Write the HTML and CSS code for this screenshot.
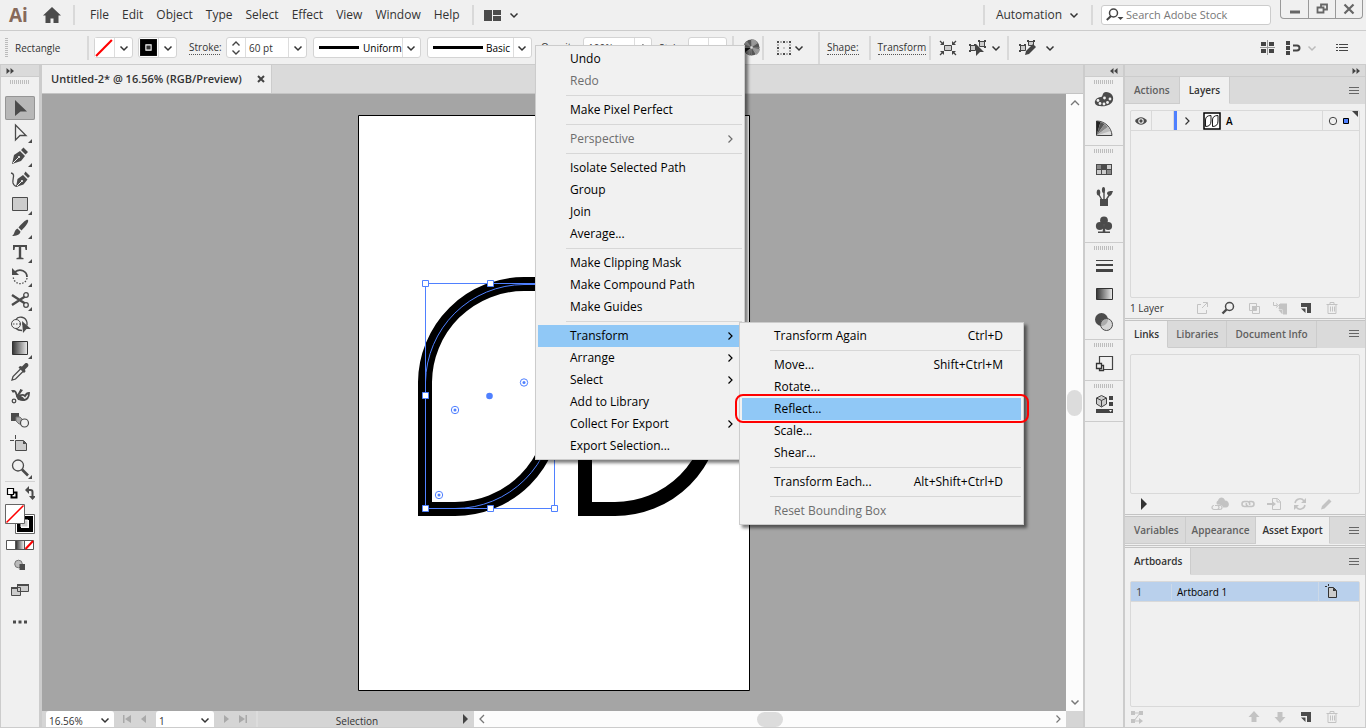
FILE: index.html
```html
<!DOCTYPE html>
<html lang="en">
<head>
<meta charset="utf-8">
<title>Untitled-2* @ 16.56% (RGB/Preview)</title>
<link rel="stylesheet" href="styles.css">
</head>
<body>
<svg class="defs" aria-hidden="true">
  <defs>
    <linearGradient id="ramp"><stop offset="0" stop-color="#333"/><stop offset="1" stop-color="#eee"/></linearGradient>
    <symbol id="chev" viewBox="0 0 10 10"><path d="M1.500 3.500 5 7l3.500-3.500" fill="none" stroke="currentColor" stroke-width="1.500"/></symbol>
    <symbol id="chev-r" viewBox="0 0 10 10"><path d="M3.500 1.500 7 5 3.500 8.500" fill="none" stroke="currentColor" stroke-width="1.200"/></symbol>
    <symbol id="burger" viewBox="0 0 12 10"><path d="M1 1.500h10M1 4.500h10M1 7.500h10" stroke="currentColor" fill="none"/></symbol>
    <symbol id="trash" viewBox="0 0 14 14"><path d="M1.500 3.500h11M5 3V1.500h4V3M3 4v8.500h8V4M5.500 5.500v5M7.500 5.500v5M9.500 5.500v5" fill="none" stroke="currentColor"/></symbol>
    <symbol id="newpage" viewBox="0 0 14 14"><path d="M2 2h10v10H8V6H2z" fill="currentColor"/><path d="M2 7.500h4.500V12z" fill="currentColor"/></symbol>
    <symbol id="dbl-r" viewBox="0 0 8 6"><path d="M.5 0 4 3 .5 6zM4.500 0 8 3 4.500 6z" fill="#444"/></symbol>
  </defs>
</svg>

<header class="menubar">
  <div class="logo">Ai</div>
  <button class="home" aria-label="Home"><svg viewBox="0 0 18 16" width="18" height="16"><path d="M9 0 18 8.500h-2.500V16h-5v-4.500h-3V16h-5V8.500H0z" fill="#4b4b4b"/></svg></button>
  <i class="rule"></i>
  <nav class="menus">
    <button>File</button><button>Edit</button><button>Object</button><button>Type</button><button>Select</button><button>Effect</button><button>View</button><button>Window</button><button>Help</button>
  </nav>
  <i class="rule"></i>
  <button class="arrange" aria-label="Arrange documents"><svg width="17" height="11" viewBox="0 0 17 11"><path d="M0 0h8v11H0zM9 0h8v5H9zM9 6h8v5H9z" fill="#4b4b4b"/></svg><svg width="10" height="10"><use href="#chev"/></svg></button>
  <span class="grow"></span>
  <i class="rule"></i>
  <button class="workspace-name">Automation<svg width="10" height="10"><use href="#chev"/></svg></button>
  <i class="rule"></i>
  <label class="search"><svg width="18" height="14" viewBox="0 0 18 14"><circle cx="7.500" cy="5" r="4" fill="none" stroke="#444" stroke-width="1.500"/><path d="M5 8 .8 12" stroke="#444" stroke-width="2"/><path d="M11.500 9h6l-3 3z" fill="#444"/></svg><input type="text" placeholder="Search Adobe Stock" aria-label="Search Adobe Stock"></label>
  <div class="winbtns">
    <button aria-label="Minimize"><svg width="12" height="12"><path d="M1 9h10" stroke="#666" stroke-width="3"/></svg></button>
    <button aria-label="Restore"><svg width="12" height="12" viewBox="0 0 12 12"><path d="M5 4V1.500h6v5H8M1.500 4.500h6v5h-6z" fill="none" stroke="#666" stroke-width="1.800"/></svg></button>
    <button aria-label="Close"><svg width="12" height="12" viewBox="0 0 12 12"><path d="m1.500 1.500 9 9m0-9-9 9" stroke="#666" stroke-width="2.200"/></svg></button>
  </div>
</header>

<section class="control">
  <i class="grip-v"></i>
  <span class="objname">Rectangle</span>
  <i class="rule"></i>
  <button class="swatch" aria-label="Fill"><svg class="chip" viewBox="0 0 18 18"><path fill="#fff" d="M0 0h18v18H0z"/><path d="m1 17 15-15" stroke="#f00" stroke-width="2"/></svg><svg class="arr"><use href="#chev"/></svg></button>
  <button class="swatch" aria-label="Stroke colour"><svg class="chip" viewBox="0 0 18 18"><path d="M1 1h16v16H1z"/><path d="M6.500 6.500h5v5h-5z" fill="#333" stroke="#fff"/></svg><svg class="arr"><use href="#chev"/></svg></button>
  <label class="dotted stroke-label" for="sw">Stroke:</label>
  <div class="field weight"><svg width="18" height="18" viewBox="0 0 18 18"><path d="m5.500 6.500 3.500-3.500 3.500 3.500M5.500 11.500l3.500 3.500 3.500-3.500" fill="none" stroke="#444" stroke-width="1.400"/></svg><input id="sw" type="text" value="60 pt"><svg class="arr"><use href="#chev"/></svg></div>
  <div class="combo profile"><select aria-label="Width profile"><option>Uniform</option></select><i class="line"></i><svg class="arr"><use href="#chev"/></svg></div>
  <div class="combo brush"><select aria-label="Brush"><option>Basic</option></select><i class="line"></i><svg class="arr"><use href="#chev"/></svg></div>
  <label class="dotted opacity" for="op">Opacity:</label>
  <div class="field opac"><input id="op" type="text" value="100%"><svg class="arr"><use href="#chev-r"/></svg></div>
  <span class="style-label">Style:</span>
  <button class="swatch" aria-label="Graphic style"><svg class="chip"></svg><svg class="arr"><use href="#chev"/></svg></button>
  <i class="rule"></i>
  <button class="ic recolor" aria-label="Recolor artwork"><svg width="17" height="17" viewBox="0 0 17 17"><circle cx="8.500" cy="8.500" r="8" fill="#555"/><path d="M8.500 8.500 8 0a8 8 0 0 1 7 4zM8.500 8.500 17 10a8 8 0 0 1-4 6z" fill="#999"/><path d="M8.500 8.500 2 13a8 8 0 0 0 5 3.500zM8.500 8.500 1 5l3-3z" fill="#777"/><path d="M8.500 8.500 0 9a8 8 0 0 0 2 4z" fill="#111"/><path d="M8.500.5v16M.5 8.500h16M3 3l11 11M14 3 3 14" stroke="#888" stroke-width=".5"/><circle cx="8.500" cy="8.500" r="1.200" fill="#ddd"/></svg></button>
  <i class="rule"></i>
  <button class="ic align" aria-label="Align to"><svg width="16" height="16" viewBox="0 0 16 16"><path d="M2 2h12v12H2z" fill="none" stroke="#4b4b4b" stroke-width=".8"/><path d="M.5.500h3v3h-3zM6.500.500h3v3h-3zM12.500.500h3v3h-3zM.5 6.500h3v3h-3zM7 7h2v2H7zM12.500 6.500h3v3h-3zM.5 12.500h3v3h-3zM6.500 12.500h3v3h-3zM12.500 12.500h3v3h-3z" fill="#4b4b4b" stroke="#f0f0f0"/></svg><svg class="mini"><use href="#chev"/></svg></button>
  <i class="rule tall"></i>
  <button class="dotted shape">Shape:</button>
  <i class="rule"></i>
  <button class="dotted transform">Transform</button>
  <i class="rule"></i>
  <button class="ic iso" aria-label="Isolate selected object"><svg width="18" height="16" viewBox="0 0 18 16"><path d="M5.500 5.500h7v5h-7z" fill="#ccc" stroke="#444"/><path d="m1 1 3 3m13-3-3 3M1 15l3-3m13 3-3-3" stroke="#444" stroke-width="1.300"/><path d="M5 1v4H1zM13 1v4h4zM5 15v-4H1zM13 15v-4h4z" fill="#444"/></svg></button>
  <button class="ic similar" aria-label="Select similar"><svg width="17" height="16" viewBox="0 0 17 16"><path d="M1.500 5.500h5v5h-5zM10.500 1.500h5v5h-5z" fill="#ccc" stroke="#444"/><path d="M0 4h2v2H0zM5 4h2v2H5zM0 10h2v2H0zM9 0h2v2H9zM15 0h2v2h-2zM15 6h2v2h-2z" fill="#444"/><path d="m7 4 8 8h-4l-4 4z" fill="#444"/></svg><svg class="mini"><use href="#chev"/></svg></button>
  <i class="rule"></i>
  <button class="ic edit" aria-label="Edit similar"><svg width="17" height="16" viewBox="0 0 17 16"><path d="M1.500 5.500h5v5h-5zM9.500 1.500h5v4h-5z" fill="#ccc" stroke="#444"/><path d="M0 4h2v2H0zM5 4h2v2H5zM0 10h2v2H0zM8 0h2v2H8zM14 0h2v2h-2z" fill="#444"/><path d="m6 15 1-4 7-7 3 3-7 7z" fill="#444"/></svg><svg class="mini"><use href="#chev"/></svg></button>
  <span class="grow"></span>
  <button class="ic pix" aria-label="Snap to pixel"><svg width="15" height="15" viewBox="0 0 15 15"><path d="M1 2h5v4H1zM9 2h5v4H9zM1 9h5v4H1zM9 9h5v4H9z" fill="#444"/><path d="M7.500 0v15M0 7.500h15" stroke="#999"/></svg></button>
  <button class="ic snap" aria-label="Snap options"><svg width="15" height="14" viewBox="0 0 15 14"><path d="M0 0h4v4H0zM0 5h4v4H0zM0 10h4v4H0z" fill="#444"/><path d="M7 4.500h4a2.500 2.500 0 0 1 0 5H7" fill="none" stroke="#444" stroke-width="2"/></svg><svg class="mini faded"><use href="#chev"/></svg></button>
  <button class="ic" aria-label="Panel menu"><svg width="12" height="10" viewBox="0 0 12 10"><path d="M3 1.500h9M3 4.500h9M3 7.500h9M0 1.500h2M0 4.500h2M0 7.500h2" stroke="#444"/></svg></button>
</section>

<main class="work">
  <aside class="tools">
    <div class="strip"><svg width="8" height="6"><use href="#dbl-r"/></svg></div>
    <i class="grip"></i>
    <div class="toollist">
      <button class="tool on" aria-label="Selection"><svg viewBox="0 0 24 24"><path d="m7 4 12 11.500h-6.500L7 20z" fill="#4b4b4b"/></svg></button>
      <button class="tool more" aria-label="Direct selection"><svg viewBox="0 0 24 24"><path d="m7.500 5 10.500 10.500h-6L7.500 20z" fill="none" stroke="#4b4b4b" stroke-width="1.300"/></svg></button>
      <button class="tool more" aria-label="Pen"><svg viewBox="0 0 24 24"><path d="m4 20 2-9 6-4 5 5-4 5-9 3zM13 6l2.500-2.500L20 8l-2.500 2.500z" fill="#4b4b4b"/><path d="m5 19 5.500-5.500" stroke="#f0f0f0"/><circle cx="11" cy="13" r="1.100" fill="#f0f0f0"/></svg></button>
      <button class="tool" aria-label="Curvature"><svg viewBox="0 0 24 24"><path d="m8 19 1.500-8 5.500-4 4.500 4.500-4 5L8 19zM16 6l1.500-2.500L22 8l-2 2z" fill="#4b4b4b"/><path d="M3 5c5 1 1 6 2 10 1 3 3 4 5 2" fill="none" stroke="#4b4b4b" stroke-width="1.300"/><path d="m9 18 5-5" stroke="#f0f0f0"/><circle cx="14" cy="13" r="1.100" fill="#f0f0f0"/></svg></button>
      <button class="tool more" aria-label="Rectangle"><svg viewBox="0 0 24 24"><path d="M4.500 5.500h15v13h-15z" fill="#ccc" stroke="#4b4b4b"/></svg></button>
      <button class="tool more" aria-label="Paintbrush"><svg viewBox="0 0 24 24"><path d="M20 4c-1-1-4 1-9.500 7.500l3 3C18 10 21 6 20 4zM9.500 12.500l3 3C12 19 8 20 4 20c3-2 2-6 5.500-7.500z" fill="#4b4b4b"/></svg></button>
      <button class="tool more" aria-label="Type"><svg viewBox="0 0 24 24"><path d="M5 5h14v5h-1.500L17 7h-3.800v10.500l2.300.5v1.200h-7V18l2.300-.5V7H7l-.5 3H5z" fill="#4b4b4b"/></svg></button>
      <button class="tool more" aria-label="Rotate"><svg viewBox="0 0 24 24"><path d="M7 8c5-4 12-1 12 5" fill="none" stroke="#4b4b4b" stroke-width="1.800"/><path d="M4 4v7h7z" fill="#4b4b4b"/><path d="M19 14c-1 6-9 8-13 2l-1-3" fill="none" stroke="#4b4b4b" stroke-width="1.300" stroke-dasharray="1.500 1.500"/></svg></button>
      <button class="tool more" aria-label="Scissors"><svg viewBox="0 0 24 24"><path d="m4 7 13 8.500M4 17l13-8.500" stroke="#4b4b4b" stroke-width="2.400"/><circle cx="18" cy="7" r="2.300" fill="#f0f0f0" stroke="#4b4b4b" stroke-width="1.300"/><circle cx="18" cy="17" r="2.300" fill="#f0f0f0" stroke="#4b4b4b" stroke-width="1.300"/></svg></button>
      <button class="tool" aria-label="Shape builder"><svg viewBox="0 0 24 24"><circle cx="8" cy="12" r="4.500" fill="none" stroke="#4b4b4b"/><path d="M8 7.500c2-4 10-3 11 3v3M8 16.500c2 2 4 2 6 2" fill="none" stroke="#4b4b4b" stroke-width="1.300"/><path d="M5 12h10" stroke="#4b4b4b" stroke-dasharray="1.500 1.500"/><path d="m14 9 9 8h-4.500L15 21z" fill="#4b4b4b"/></svg></button>
      <button class="tool more" aria-label="Gradient"><svg viewBox="0 0 24 24"><path d="M4.500 5.500h15v13h-15z" fill="url(#ramp)" stroke="#333"/></svg></button>
      <button class="tool" aria-label="Eyedropper"><svg viewBox="0 0 24 24"><path d="m13 8.500-8 8-1 3.500 3.500-1 8-8" fill="none" stroke="#4b4b4b" stroke-width="1.300"/><path d="m12 6 2 .5 3-3c2-1.500 4.500 1 3 3l-3 3 .5 2L16 13l-5.500-5.500z" fill="#4b4b4b"/></svg></button>
      <button class="tool" aria-label="Puppet warp"><svg viewBox="0 0 24 24"><path d="M4 7c4-1 4 2 5 5s3 4 6 4c4 0 6-3 6-7-2 0-3 1-4 3-2-2-5-1-8 1l4-7" fill="none" stroke="#4b4b4b" stroke-width="1.800"/><path d="M8 12c4-1 8 0 9 5l-7-1z" fill="#4b4b4b"/><path d="m12 5 3 1-3 4zM3 6l4 1-2 2z" fill="#4b4b4b"/><circle cx="6" cy="17" r="1.800" fill="#f0f0f0" stroke="#4b4b4b" stroke-width="1.300"/></svg></button>
      <button class="tool" aria-label="Blend"><svg viewBox="0 0 24 24"><path d="M3 5h8v8H3z" fill="#4b4b4b"/><path d="M8 9h4l3 3v4h-4l-3-3z" fill="#aaa" stroke="#777"/><circle cx="16.500" cy="15" r="4" fill="#f0f0f0" stroke="#4b4b4b" stroke-width="1.200"/></svg></button>
      <button class="tool" aria-label="Artboard"><svg viewBox="0 0 24 24"><path d="M7.500 8.500h8l3 3v7h-11z" fill="#ccc" stroke="#4b4b4b"/><path d="M15 8.500V12h3.500z" fill="#4b4b4b"/><path d="M2 8.500h4M7.500 3v4" stroke="#4b4b4b"/></svg></button>
      <button class="tool more" aria-label="Zoom"><svg viewBox="0 0 24 24"><circle cx="10" cy="9.500" r="5.500" fill="none" stroke="#4b4b4b" stroke-width="1.300"/><path d="m14 13.500 6 6" stroke="#4b4b4b" stroke-width="2.600"/></svg></button>
    </div>
    <div class="toolfoot">
      <svg width="30" height="22" viewBox="0 0 30 22"><path d="M6.500 10.500h5v5h-5z" fill="#fff" stroke="#000" stroke-width="2"/><path d="M2.500 6.500h6v6h-6z" fill="#fff" stroke="#000" stroke-width="1.200"/><path d="M22 8h3.500q2 0 2 2v5" fill="none" stroke="#4b4b4b" stroke-width="2"/><path d="M24 4v8l-4-4zM24 14h7l-3.500 4z" fill="#4b4b4b"/></svg>
      <svg width="30" height="30" viewBox="0 0 30 30"><path d="M10.500 10.500h19v19h-19z" fill="#fff" stroke="#666"/><path d="M14 14h12v12H14z" fill="none" stroke="#000" stroke-width="4"/><path d="M16 16h7v7h-7z" fill="#ccc" stroke="#fff"/><path d="M.5.500h19v19H.5z" fill="#fff" stroke="#666"/><path d="m1.500 18.500 17-17" stroke="#f00" stroke-width="1.500"/></svg>
      <svg width="28" height="10" viewBox="0 0 28 10"><path d="M.5.500h27v9H.5z" fill="#fff" stroke="#555"/><path d="M10 1h8v8h-8z" fill="url(#ramp)"/><path d="m19.500 9 7.500-8" stroke="#f00" stroke-width="2"/><path d="M9.500 0v10M18.500 0v10" stroke="#555"/></svg>
      <svg width="12" height="12" viewBox="0 0 12 12"><circle cx="4.500" cy="5" r="3.800" fill="#bbb" stroke="#777"/><path d="M5.500 5h5.500v6h-5.500z" fill="#4b4b4b"/></svg>
      <svg width="20" height="14" viewBox="0 0 20 14"><path d="M1.500 4.500h9v8h-9zM7.500 1.500h11v7h-11z" fill="#ccc" stroke="#4b4b4b"/><path d="M7 1h12v2H7zM1 4h6v2H1z" fill="#4b4b4b"/></svg>
      <svg class="dots" width="16" height="6" viewBox="0 0 16 6"><path d="M1 3h3M6.500 3h3M12 3h3" stroke="#4b4b4b" stroke-width="3"/></svg>
    </div>
  </aside>

  <section class="doc">
    <div class="tabs"><div class="doctab"><span>Untitled-2* @ 16.56% (RGB/Preview)</span><button aria-label="Close document"><svg width="8" height="8"><path d="m1 1 6 6m0-6-6 6" stroke="#444" stroke-width="2"/></svg></button></div></div>
    <div class="viewport">
      <div class="canvas">
        <svg class="artboard" width="392" height="576" viewBox="358 115 392 576">
          <path d="M358.500 115.500h391v575h-391z" fill="#fff" stroke="#000"/>
          <g fill="none" stroke="#000" stroke-width="14"><path d="M425 509V382A99 99 0 0 1 524 284H554V410A99 99 0 0 1 455 509Z"/><path d="M585 509V382A99 99 0 0 1 684 284H714V410A99 99 0 0 1 615 509Z"/></g>
          <g fill="none" stroke="#4f80ff"><path d="M425.500 508.500V382A99 99 0 0 1 524 284.500H554V410A99 99 0 0 1 455 508.500Z"/><path d="M425.500 283.500h129v225h-129z"/></g>
          <g fill="#fff" stroke="#4f80ff"><path d="M422.500 280.500h6v6h-6zM487.500 280.500h6v6h-6zM551.500 280.500h6v6h-6zM422.500 392.500h6v6h-6zM422.500 505.500h6v6h-6zM487.500 505.500h6v6h-6zM551.500 505.500h6v6h-6z"/><circle cx="455" cy="410" r="3.700"/><circle cx="524" cy="382.500" r="3.700"/><circle cx="439" cy="495" r="3.700"/></g>
          <g fill="#4f80ff"><circle cx="455" cy="410" r="1.500"/><circle cx="524" cy="382.500" r="1.500"/><circle cx="439" cy="495" r="1.500"/><circle cx="489.500" cy="396" r="3.300"/></g>
        </svg>
      </div>
      <div class="vscroll"><svg width="10" height="10"><path d="m1 7 4-4 4 4" fill="none" stroke="#777" stroke-width="1.300"/></svg><i></i><svg width="10" height="10"><use href="#chev"/></svg></div>
    </div>
    <footer class="status">
      <div class="combo zoomsel"><select aria-label="Zoom level"><option>16.56%</option></select><svg class="arr"><use href="#chev"/></svg></div>
      <svg class="nav" width="26" height="10" viewBox="0 0 26 10"><path d="M1 1h1.500v8H1zM9 1v8L3 5zM24 1v8l-5-4z" fill="#a9a9a9"/></svg>
      <div class="combo boardsel"><select aria-label="Artboard navigation"><option>1</option></select><svg class="arr"><use href="#chev"/></svg></div>
      <svg class="nav" width="26" height="10" viewBox="0 0 26 10"><path d="M2 1v8l5-4zM17 1v8l6-4zM23.500 1H25v8h-1.500z" fill="#a9a9a9"/></svg>
      <div class="toolname">Selection</div>
      <svg class="play" width="18" height="10" viewBox="0 0 18 10"><path d="M7 0v10l5-5z" fill="#444"/></svg>
      <div class="hscroll"><svg width="10" height="10"><path d="M7 1 3 5l4 4" fill="none" stroke="#777" stroke-width="1.300"/></svg><i></i><svg width="10" height="10"><use href="#chev-r"/></svg></div>
    </footer>
  </section>

  <aside class="dock">
    <div class="strip right"><svg width="8" height="6" class="flip"><use href="#dbl-r"/></svg></div>
    <div class="dgroup"><i class="grip"></i>
      <button aria-label="Color"><svg viewBox="0 0 20 20"><path d="M1 11C2 8 5 7 7 7c2 0 1-5 5-5 5 0 8 4 7 8-1 5-8 7-13 6-3 0-6-2-5-5z" fill="#4b4b4b"/><g fill="#f0f0f0"><circle cx="4" cy="10.500" r="1.400"/><circle cx="6" cy="13.500" r="1.400"/><circle cx="10" cy="14" r="1.400"/><circle cx="13.500" cy="12.500" r="1.400"/><circle cx="16" cy="9" r="1.400"/><circle cx="10.500" cy="8" r="1.400"/></g></svg></button>
      <button aria-label="Color guide"><svg viewBox="0 0 20 20"><path d="M2.500 3c8 0 15 6 15.500 14.500H2.500z" fill="#ddd" stroke="#444"/><path d="M2.500 17.500V3l4 1z" fill="#222"/><path d="m2.500 17.500 4-13.500 4 2z" fill="#555"/><path d="m2.500 17.500 8-11.500 3.500 3z" fill="#888"/><path d="M2.500 17.500 14 9l2.500 4z" fill="#bbb"/></svg></button>
    </div>
    <div class="dgroup"><i class="grip"></i>
      <button aria-label="Swatches"><svg viewBox="0 0 20 20"><path d="M2 5h16v11H2z" fill="#4b4b4b"/><path d="M3 6h4v4H3zM13 11h4v4h-4z" fill="#888"/><path d="M13 6h4v4h-4zM8 11h4v4H8zM3 11h4v4H3z" fill="#ccc"/></svg></button>
      <button aria-label="Brushes"><svg viewBox="0 0 20 20"><path d="M6 12h8v7H6z" fill="#4b4b4b"/><path d="M8 13 4 6M10 13V5M12 13l4-6" stroke="#4b4b4b" stroke-width="1.400"/><ellipse cx="4.500" cy="5.500" rx="1.800" ry="3" fill="#4b4b4b"/><ellipse cx="9.500" cy="3" rx="1.600" ry="3" fill="#4b4b4b"/><path d="M13 7c0-3 2-3 6-3-1 3-2 5-4 5z" fill="#4b4b4b"/></svg></button>
      <button aria-label="Symbols"><svg viewBox="0 0 20 20"><circle cx="10" cy="5.500" r="3.900" fill="#4b4b4b"/><circle cx="5.800" cy="11" r="3.900" fill="#4b4b4b"/><circle cx="14.200" cy="11" r="3.900" fill="#4b4b4b"/><path d="M9.300 8h1.400l.6 8.500H16V18H4v-1.500h4.700z" fill="#4b4b4b"/></svg></button>
    </div>
    <div class="dgroup"><i class="grip"></i>
      <button aria-label="Stroke"><svg viewBox="0 0 20 20"><path d="M2 4h17v1H2zM2 8h17v2H2zM2 13h17v3H2z" fill="#444"/></svg></button>
      <button aria-label="Gradient"><svg viewBox="0 0 20 20"><path d="M2.500 4.500h16v11h-16z" fill="url(#ramp)" stroke="#333"/></svg></button>
      <button aria-label="Transparency"><svg viewBox="0 0 20 20"><circle cx="7.500" cy="7.500" r="6.500" fill="#4b4b4b"/><circle cx="12.500" cy="12.500" r="6" fill="#ccc" fill-opacity=".75" stroke="#4b4b4b"/></svg></button>
    </div>
    <div class="dgroup"><i class="grip"></i>
      <button aria-label="Asset export"><svg viewBox="0 0 20 20"><path d="M5.500 10V3.500h13v13H10" fill="none" stroke="#444" stroke-width="1.200"/><path d="M2.500 10.500h5v5h-5zM5.500 15.500v2h4v-5h-2" fill="none" stroke="#333" stroke-width="1.300"/></svg></button>
    </div>
    <div class="dgroup"><i class="grip"></i>
      <button aria-label="3D and materials"><svg viewBox="0 0 20 20"><path d="m2.500 4 5-2.500 5 2.500v6l-5 3-5-3zM2.500 4l5 2.500v6M7.500 6.500l5-2.500" fill="#ccc" stroke="#444"/><path d="M15 2h4v4h-4zM15 8h4v4h-4zM2 15h17v4H2z" fill="#444"/><path d="M15 16h3l-1.500 2z" fill="#fff"/></svg></button>
    </div>
  </aside>

  <aside class="panels">
    <div class="strip right"><svg width="8" height="6"><use href="#dbl-r"/></svg></div>
    <section class="panel layers">
      <div class="ptabs"><button>Actions</button><button class="on">Layers</button><svg width="12" height="10"><use href="#burger"/></svg></div>
      <div class="plist">
        <div class="layer">
          <span class="eye"><svg width="12" height="8" viewBox="0 0 12 8"><path d="M0 4c3-5 9-5 12 0-3 5-9 5-12 0z" fill="#4b4b4b"/><circle cx="6" cy="4" r="2.200" fill="#4b4b4b" stroke="#f0f0f0" stroke-width="1.100"/></svg></span><span class="lock"></span><i class="bar"></i>
          <svg class="exp" width="10" height="10"><use href="#chev-r"/></svg>
          <svg class="thumb" width="18" height="18" viewBox="0 0 18 18"><path d="M1 1h16v16H1z" fill="#fff" stroke="#000" stroke-width="1.500"/><path d="M2.500 14.500V8q0-4.500 5.500-4.500V9q0 5.500-5.500 5.500zM9.500 14.500V8q0-4.500 5.500-4.500V9q0 5.500-5.500 5.500z" fill="none" stroke="#000" stroke-width=".9"/></svg>
          <span class="lname">A</span>
          <span class="target"><svg width="36" height="20" viewBox="0 0 36 20"><circle cx="10" cy="10" r="3.700" fill="none" stroke="#444"/><path d="M20.500 7.500h5v5h-5z" fill="#4f80ff" stroke="#000"/><path d="M29 0h6v6z" fill="#444"/></svg></span>
        </div>
      </div>
      <div class="pfoot"><span>1 Layer</span>
        <div class="picons"><svg viewBox="0 0 14 14"><path d="M6 3.500H2.500v9h9V9M8 1.500h4.500V6M12 2 7 7" fill="none" stroke="currentColor"/></svg><svg class="dark" viewBox="0 0 14 14"><circle cx="8.500" cy="5.500" r="4" fill="none" stroke="currentColor" stroke-width="1.500"/><path d="m5.500 8.500-4 4" stroke="currentColor" stroke-width="2.400"/></svg><svg viewBox="0 0 14 14"><path d="M2.500 2.500h7v7h-7zM5.500 5.500h7v7h-7z" fill="none" stroke="currentColor"/><path d="M5 5h4v4H5z" fill="currentColor"/></svg><svg viewBox="0 0 14 14"><path d="M.5 1v3.500H4M3 2.500 5.500 4.500 3 6.500M7 3h7v10h-4V8H6z" fill="none" stroke="currentColor"/><path d="M6 3h8v10h-4V8H6zM5.500 9H9v4z" fill="currentColor"/></svg><svg class="dark" viewBox="0 0 14 14"><use href="#newpage"/></svg><svg viewBox="0 0 14 14"><use href="#trash"/></svg></div>
      </div>
    </section>
    <section class="panel links">
      <div class="ptabs"><button class="on">Links</button><button>Libraries</button><button>Document Info</button><svg width="12" height="10"><use href="#burger"/></svg></div>
      <div class="plist"></div>
      <div class="pfoot"><svg class="tri" width="6" height="12"><path d="M0 0v12l6-6z" fill="#333"/></svg>
        <div class="picons"><svg class="cloud" width="18" height="14" viewBox="0 0 18 14"><path d="M6 7.500a3 3 0 0 1 1-4c1-4 6-4 7 0 5 0 5 7 1 7h-3c0-2-2-3-6-3z" fill="currentColor"/><path d="M4 8.500h2a2 2 0 0 1 0 4H3a2 2 0 0 1 0-4M7 8.500h2a2 2 0 0 1 0 4H6" fill="none" stroke="currentColor" stroke-width="1.200"/></svg><svg viewBox="0 0 14 14"><path d="M6 9.500H3.500a2.500 2.500 0 0 1 0-5h3A2.500 2.500 0 0 1 8.500 8M8 4.500h2.500a2.500 2.500 0 0 1 0 5h-3A2.500 2.500 0 0 1 5.500 6" fill="none" stroke="currentColor" stroke-width="1.600"/></svg><svg viewBox="0 0 14 14"><path d="M5.500 5V1.500h5l3 3v8h-8V9M10 2v3h3" fill="none" stroke="currentColor"/><path d="M0 6h5V4l4 3-4 3V8H0z" fill="currentColor"/></svg><svg viewBox="0 0 14 14"><path d="M2 6a5 5 0 0 1 9-2M12 8a5 5 0 0 1-9 2" fill="none" stroke="currentColor" stroke-width="1.500"/><path d="M13 1v5H8zM1 13V8h5z" fill="currentColor"/></svg><svg viewBox="0 0 14 14"><path d="m2 12.500 1-3.500 7-7L12.500 4.500l-7 7z" fill="currentColor"/></svg></div>
      </div>
    </section>
    <section class="panel assets">
      <div class="ptabs"><button>Variables</button><button>Appearance</button><button class="on">Asset Export</button><svg width="12" height="10"><use href="#burger"/></svg></div>
    </section>
    <section class="panel boards">
      <div class="ptabs"><button class="on">Artboards</button><svg width="12" height="10"><use href="#burger"/></svg></div>
      <div class="plist">
        <div class="board"><span class="num">1</span><span class="bname">Artboard 1</span><span class="bicon"><svg width="14" height="14" viewBox="0 0 14 14"><path d="M3.500 3.500h5l3 3v7h-8z" fill="#ccc" stroke="#333"/><path d="M8 3.500V7h3.500z" fill="#333"/><path d="M0 2.500h2M3.500 0v2" stroke="#333"/></svg></span></div>
      </div>
      <div class="pfoot"><svg class="reorder" width="14" height="14" viewBox="0 0 14 14"><path d="M1 1h4v4H1zM9 1h4v4H9zM1 9h4v4H1zM9 8l4 3-4 3z" fill="currentColor"/><path d="M4 3h6L4 11h6" fill="none" stroke="currentColor"/></svg>
        <div class="picons"><svg viewBox="0 0 14 14"><path d="m7 1 5.500 6H9.500v5h-5V7h-3z" fill="currentColor"/></svg><svg viewBox="0 0 14 14"><path d="M7 13 1.500 7h3V2h5v5h3z" fill="currentColor"/></svg><svg class="dark" viewBox="0 0 14 14"><use href="#newpage"/></svg><svg viewBox="0 0 14 14"><use href="#trash"/></svg></div>
      </div>
    </section>
  </aside>
</main>

<div class="menu context" role="menu">
  <button>Undo</button><button disabled>Redo</button><hr>
  <button>Make Pixel Perfect</button><hr>
  <button disabled>Perspective<svg width="10" height="10"><use href="#chev-r"/></svg></button><hr>
  <button>Isolate Selected Path</button><button>Group</button><button>Join</button><button>Average...</button><hr>
  <button>Make Clipping Mask</button><button>Make Compound Path</button><button>Make Guides</button><hr>
  <div class="parent">
    <button class="hot">Transform<svg width="10" height="10"><use href="#chev-r"/></svg></button>
    <div class="menu sub" role="menu">
      <button>Transform Again<kbd>Ctrl+D</kbd></button><hr>
      <button>Move...<kbd>Shift+Ctrl+M</kbd></button><button>Rotate...</button><button class="hot ringed">Reflect...</button><button>Scale...</button><button>Shear...</button><hr>
      <button>Transform Each...<kbd>Alt+Shift+Ctrl+D</kbd></button><hr>
      <button disabled>Reset Bounding Box</button>
    </div>
  </div>
  <button>Arrange<svg width="10" height="10"><use href="#chev-r"/></svg></button><button>Select<svg width="10" height="10"><use href="#chev-r"/></svg></button><button>Add to Library</button><button>Collect For Export<svg width="10" height="10"><use href="#chev-r"/></svg></button><button>Export Selection...</button>
</div>
</body>
</html>
```

FILE: styles.css
```css
* { box-sizing: border-box; }
body {
  margin: 0; height: 100vh; overflow: hidden; display: flex; flex-direction: column;
  background: #f0f0f0; color: #333; font: 12px/16px "Open Sans", "Noto Sans", sans-serif;
}
button, input, select, kbd { font: inherit; color: inherit; }
button { background: none; border: 0; padding: 0; margin: 0; }
input, select { border: 0; background: none; padding: 0; margin: 0; min-width: 0; outline: 0; appearance: none; border-radius: 0; }
svg { display: block; flex: none; }
i { display: block; flex: none; }
.defs { position: absolute; width: 0; height: 0; }
.grow { flex: 1; }
.rule { width: 2px; height: 20px; background: #d9d9d9; }
.strip { height: 12px; flex: none; background: #dadada; border-bottom: 1px solid #ccc; display: flex; align-items: center; padding: 0 5px; }
.strip.right { justify-content: flex-end; }
.flip { transform: scaleX(-1); }
.grip { height: 4px; width: 20px; margin: 0 auto; background: repeating-linear-gradient(90deg, #bdbdbd 0 1px, transparent 1px 2px); }
.arr, .mini { width: 10px; height: 10px; }

/* Application bar */
.menubar { height: 31px; flex: none; display: flex; align-items: center; border-bottom: 1px solid #ccc; padding-left: 9px; }
.logo { width: 34px; font: bold 19px/24px "Open Sans", sans-serif; color: #86695a; }
.home { margin-right: 12px; }
.menus { display: flex; gap: 13px; margin: 0 12px 0 15px; }
.arrange { display: flex; align-items: center; gap: 8px; margin-left: 10px; }
.workspace-name { display: flex; align-items: center; gap: 7px; margin: 0 12px 0 11px; }
.search { width: 170px; height: 20px; margin: 0 9px 0 8px; display: flex; align-items: center; gap: 2px; padding-left: 4px; background: #fff; border: 1px solid #ccc; border-radius: 3px; }
.search input { flex: 1; font-size: 11px; }
.search input::placeholder { color: #777; opacity: 1; }
.winbtns { align-self: flex-start; display: flex; margin-right: 3px; height: 19px; border: 1px solid #999; border-top: 0; border-radius: 0 0 4px 4px; }
.winbtns button { width: 27px; display: grid; place-items: center; }
.winbtns button + button { border-left: 1px solid #999; }

/* Control bar */
.control { height: 34px; flex: none; display: flex; align-items: center; border-bottom: 1px solid #ccc; padding: 0 18px 0 5px; font-size: 10px; white-space: nowrap; }
.control > * { flex: none; }
.control > .grow { flex: 1; }
.control .rule { height: 24px; }
.control .rule.tall { height: 32px; }
.grip-v { width: 3px; height: 20px; background: repeating-linear-gradient(#bbb 0 1px, transparent 1px 2px); }
.objname { width: 72px; margin-left: 7px; }
.swatch, .field, .combo { height: 21px; display: flex; align-items: center; background: #fff; border: 1px solid #d4d4d4; border-radius: 3px; }
.swatch { width: 39px; margin-left: 5px; }
.chip { width: 20px; height: 19px; border-right: 1px solid #ddd; }
.swatch .arr { margin-left: 4px; }
.dotted { border-bottom: 1px dotted #555; line-height: 13px; }
.stroke-label { width: 31px; margin: 0 6px 0 12px; }
.weight { width: 81px; }
.weight input { width: 44px; height: 19px; padding-left: 3px; border: solid #ddd; border-width: 0 1px; }
.weight .arr, .opac .arr { margin-left: 4px; }
.combo { display: grid; grid-template-columns: 1fr 18px; align-items: center; }
.combo select { grid-area: 1 / 1 / 2 / 3; width: 100%; height: 100%; }
.combo .arr { grid-area: 1 / 2; justify-self: center; pointer-events: none; }
.combo .line { grid-area: 1 / 1; height: 3px; background: #000; margin-left: 5px; pointer-events: none; }
.control .combo { background: linear-gradient(90deg, transparent calc(100% - 18px), #ddd calc(100% - 18px), #ddd calc(100% - 17px), transparent calc(100% - 17px)) #fff; }
.profile { width: 108px; margin-left: 6px; }
.profile select { padding-left: 49px; color: #000; }
.profile .line { width: 40px; }
.brush { width: 105px; margin-left: 6px; }
.brush select { padding-left: 58px; color: #000; }
.brush .line { width: 50px; }
.opacity { width: 36px; margin: 0 6px 0 9px; }
.opac { width: 69px; }
.opac input { width: 51px; height: 19px; padding-left: 4px; border-right: 1px solid #ddd; }
.style-label { width: 24px; margin-left: 7px; }
.style-label + .swatch { margin-right: 5px; }
.ic { display: flex; align-items: center; gap: 9px; }
.recolor { margin: 0 2px 0 9px; }
.align { margin: 0 14px 0 12px; gap: 2px; }
.shape { margin: 0 10px 0 7px; }
.transform { margin: 0 3px 0 7px; }
.iso { margin: 0 12px 0 8px; }
.similar { margin-right: 6px; gap: 5px; }
.edit { margin-left: 10px; }
.pix { margin-right: 11px; }
.snap { margin-right: 19px; gap: 6px; }
.faded { color: #bbb; }

/* Workspace */
.work { flex: 1; min-height: 0; display: flex; border-bottom: 1px solid #ccc; }
.tools { width: 40px; border: solid #ccc; border-width: 0 1px; }
.tools .grip { margin-top: 3px; }
.toollist { margin: 12px 4px 0; padding-bottom: 1px; border-bottom: 1px solid #d2d2d2; }
.tool { display: block; width: 30px; height: 24px; padding-left: 3px; border-radius: 2px; position: relative; }
.tool svg { width: 24px; height: 24px; }
.tool.on { background: #b8b8b8; box-shadow: inset 0 0 0 1px #959595; }
.tool.more::after { content: ""; position: absolute; right: 3px; bottom: 1px; border: 2px solid #4b4b4b; border-left-color: transparent; border-top-color: transparent; }
.toolfoot { display: flex; flex-direction: column; align-items: center; }
.toolfoot svg:nth-child(3) { margin: 6px 0 9px; }
.toolfoot svg:nth-child(5) { margin-top: 12px; }
.toolfoot .dots { margin-top: 22px; }

.doc { flex: 1; min-width: 0; display: flex; flex-direction: column; border-left: 2px solid #ccc; }
.tabs { height: 29px; flex: none; display: flex; background: #dadada; border-bottom: 1px solid #c4c4c4; }
.doctab { width: 230px; display: flex; align-items: center; justify-content: space-between; padding: 0 6px 0 9px; background: #f0f0f0; border-right: 1px solid #ccc; font-size: 11px; font-weight: 600; white-space: nowrap; }
.viewport { flex: 1; min-height: 0; display: flex; }
.canvas { flex: 1; min-width: 0; display: flex; align-items: center; justify-content: center; background: #a5a5a5; overflow: hidden; }
.vscroll { width: 17px; background: #fcfcfc; display: flex; flex-direction: column; align-items: center; justify-content: space-between; padding: 4px 0; color: #777; }
.vscroll i { width: 15px; height: 26px; border-radius: 8px; background: #dcdcdc; }
.status { height: 16px; flex: none; display: flex; align-items: center; background: #d5d5d5; font-size: 10px; padding-left: 4px; }
.status .combo { height: 16px; border: 0; border-radius: 3px 3px 0 0; background: #fff; }
.status .combo select { padding-left: 3px; padding-top: 2px; }
.zoomsel { width: 68px; }
.boardsel { width: 58px; }
.nav { margin: 0 8px; }
.toolname { width: 200px; height: 16px; padding-top: 2px; text-align: center; border-left: 2px solid #dcdcdc; }
.hscroll { flex: 1; height: 16px; display: flex; align-items: center; justify-content: space-between; padding: 0 3px; margin-right: 17px; background: #fcfcfc; color: #777; }
.hscroll i { width: 26px; height: 15px; border-radius: 8px; background: #dcdcdc; }

.dock { width: 42px; border: solid #ccc; border-width: 0 2px; }
.dgroup { padding: 3px 0; border-bottom: 1px solid #ccc; }
.dgroup .grip { margin-bottom: 2px; }
.dgroup button { width: 38px; height: 28px; display: grid; place-items: center; }
.dgroup svg { width: 20px; height: 20px; }

/* Panels */
.panels { width: 241px; flex: none; display: flex; flex-direction: column; border-right: 1px solid #ccc; }
.panel { display: flex; flex-direction: column; border-bottom: 3px double #c4c4c4; }
.ptabs { height: 27px; flex: none; display: flex; align-items: center; background: #dadada; font-size: 10px; font-weight: 600; color: #606060; padding-right: 5px; white-space: nowrap; }
.ptabs button { align-self: stretch; padding: 0 8px; border: solid #ccc; border-width: 0 1px 1px 0; }
.layers .ptabs button { padding: 0 9px; }
.assets .ptabs button { padding: 0 6px; }
.ptabs button:first-child, .assets .ptabs button:first-child { padding-left: 9px; }
.ptabs button.on { background: #f0f0f0; color: #333; border-bottom-color: #f0f0f0; }
.ptabs svg { margin-left: auto; color: #666; }
.plist { flex: 1; min-height: 0; margin: 6px 5px 0; border: 1px solid #d9d9d9; border-radius: 2px; }
.pfoot { height: 20px; flex: none; display: flex; align-items: center; justify-content: space-between; padding: 0 26px 0 5px; font-size: 10px; color: #c3c3c3; }
.pfoot span { color: #333; }
.picons { display: flex; gap: 12px; }
.picons svg { width: 14px; height: 14px; }
.picons .cloud { width: 18px; }
.picons .dark { color: #4b4b4b; }
.layers { flex: 244; }
.links { flex: 196; }
.links .pfoot { padding: 0 32px 0 16px; }
.assets { flex: none; padding-bottom: 1px; }
.boards { flex: 181; border-bottom: 0; }
.layer, .board { display: flex; align-items: center; height: 20px; border-bottom: 1px solid #d9d9d9; }
.eye { width: 21px; height: 19px; display: grid; place-items: center; border-right: 1px solid #d9d9d9; }
.lock { width: 22px; height: 19px; border-right: 1px solid #d9d9d9; }
.bar { width: 3px; height: 19px; background: #4f80ff; }
.exp { margin: 0 11px 0 5px; }
.thumb { margin-right: 5px; }
.lname { flex: 1; font-size: 10px; font-weight: 600; color: #000; }
.target { border-left: 1px solid #d9d9d9; }
.board { background: #b9d0ec; color: #000; font-size: 10px; }
.num { width: 41px; padding-left: 5px; font-size: 11px; color: #444; border-right: 1px solid #ccd9e8; }
.bname { flex: 1; padding-left: 5px; }
.bicon { width: 41px; height: 19px; padding: 2px 0 0 6px; border-left: 1px solid #ccd9e8; }

/* Context menus float above the document */
.menu { padding: 2px; background: #f1f1f1; border: 1px solid #ccc; box-shadow: 3px 3px 3px rgba(0, 0, 0, .5); color: #000; }
.context { position: absolute; left: 535px; top: 45px; width: 210px; }
.menu button { display: flex; align-items: center; justify-content: space-between; width: 100%; height: 22px; padding: 0 7px 0 32px; white-space: nowrap; }
.menu button:disabled { color: #6d6d6d; }
.menu hr { border: 0; height: 1px; margin: 3px 0 3px 28px; background: #d7d7d7; }
.menu .hot { background: #90c8f6; }
.parent { position: relative; }
.sub { position: absolute; left: 201px; top: -3px; width: 285px; }
.menu.sub button { padding-right: 18px; }
.sub .ringed { position: relative; }
.ringed::after { content: ""; position: absolute; inset: -4px -8px -3px -7px; border: 2px solid #f00; border-radius: 8px; }
```
